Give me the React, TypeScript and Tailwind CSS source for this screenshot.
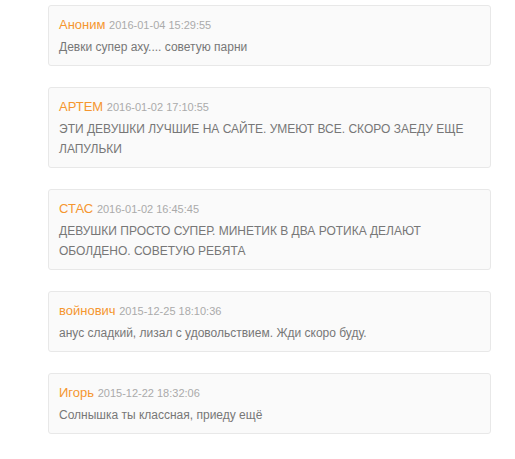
const COMMENTS = [
  {
    name: 'Аноним',
    date: '2016-01-04 15:29:55',
    text: 'Девки супер аху.... советую парни',
  },
  {
    name: 'АРТЕМ',
    date: '2016-01-02 17:10:55',
    text: 'ЭТИ ДЕВУШКИ ЛУЧШИЕ НА САЙТЕ. УМЕЮТ ВСЕ. СКОРО ЗАЕДУ ЕЩЕ ЛАПУЛЬКИ',
  },
  {
    name: 'СТАС',
    date: '2016-01-02 16:45:45',
    text: 'ДЕВУШКИ ПРОСТО СУПЕР. МИНЕТИК В ДВА РОТИКА ДЕЛАЮТ ОБОЛДЕНО. СОВЕТУЮ РЕБЯТА',
  },
  {
    name: 'войнович',
    date: '2015-12-25 18:10:36',
    text: 'анус сладкий, лизал с удовольствием. Жди скоро буду.',
  },
  {
    name: 'Игорь',
    date: '2015-12-22 18:32:06',
    text: 'Солнышка ты классная, приеду ещё',
  },
]

export default function App() {
  return (
    <div
      className="w-[515px] h-[459px] bg-white pt-[5px] pl-[48px]"
      style={{ fontFamily: '"Liberation Sans", Arial, sans-serif' }}
    >
      <div className="flex flex-col gap-[21px] w-[443px]">
        {COMMENTS.map((c) => (
          <div
            key={c.date}
            className="bg-[#fafafa] border border-[#e8e8e8] rounded-[3px] pt-[8px] pb-[8px] pl-[10px] pr-[10px]"
          >
            <div className="text-[13px] leading-[22px]">
              <span className="text-[#f5962f]">{c.name}</span>{' '}
              <span className="text-[11px] leading-none text-[#aaa]">{c.date}</span>
            </div>
            <p className="mt-px text-[12px] leading-[20px] text-[#777]">{c.text}</p>
          </div>
        ))}
      </div>
    </div>
  )
}
